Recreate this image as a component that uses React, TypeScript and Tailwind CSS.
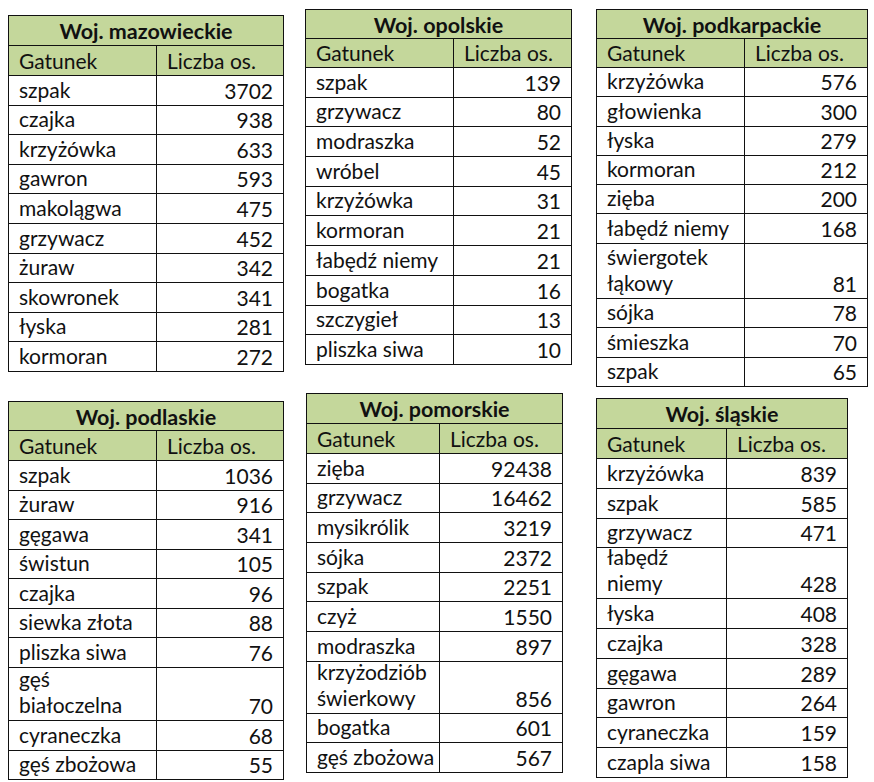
import React from "react";

type R = { n: string[]; v: string; d?: boolean };
type T = {
  title: string;
  box: string;
  lw: string;
  th: string;
  hh: string;
  rh: string;
  dh: string;
  rows: R[];
};

const s = (n: string, v: string): R => ({ n: [n], v });
const d = (a: string, b: string, v: string): R => ({ n: [a, b], v, d: true });

const row1: T[] = [
  {
    title: "Woj. mazowieckie",
    box: "w-[276px] ml-[8px] mt-[15px]",
    lw: "w-[148px]",
    th: "h-[29px]",
    hh: "h-[30px]",
    rh: "h-[29.6px]",
    dh: "h-[56px]",
    rows: [
      s("szpak", "3702"),
      s("czajka", "938"),
      s("krzyżówka", "633"),
      s("gawron", "593"),
      s("makolągwa", "475"),
      s("grzywacz", "452"),
      s("żuraw", "342"),
      s("skowronek", "341"),
      s("łyska", "281"),
      s("kormoran", "272"),
    ],
  },
  {
    title: "Woj. opolskie",
    box: "w-[267px] ml-[21px] mt-[9px]",
    lw: "w-[148px]",
    th: "h-[28px]",
    hh: "h-[29px]",
    rh: "h-[29.7px]",
    dh: "h-[56px]",
    rows: [
      s("szpak", "139"),
      s("grzywacz", "80"),
      s("modraszka", "52"),
      s("wróbel", "45"),
      s("krzyżówka", "31"),
      s("kormoran", "21"),
      s("łabędź niemy", "21"),
      s("bogatka", "16"),
      s("szczygieł", "13"),
      s("pliszka siwa", "10"),
    ],
  },
  {
    title: "Woj. podkarpackie",
    box: "w-[272px] ml-[24px] mt-[9px]",
    lw: "w-[148px]",
    th: "h-[28px]",
    hh: "h-[29px]",
    rh: "h-[29.3px]",
    dh: "h-[55.3px]",
    rows: [
      s("krzyżówka", "576"),
      s("głowienka", "300"),
      s("łyska", "279"),
      s("kormoran", "212"),
      s("zięba", "200"),
      s("łabędź niemy", "168"),
      d("świergotek", "łąkowy", "81"),
      s("sójka", "78"),
      s("śmieszka", "70"),
      s("szpak", "65"),
    ],
  },
];

const row2: T[] = [
  {
    title: "Woj. podlaskie",
    box: "w-[276px] ml-[8px] mt-[14px]",
    lw: "w-[148px]",
    th: "h-[28px]",
    hh: "h-[30px]",
    rh: "h-[29.5px]",
    dh: "h-[53.5px]",
    rows: [
      s("szpak", "1036"),
      s("żuraw", "916"),
      s("gęgawa", "341"),
      s("świstun", "105"),
      s("czajka", "96"),
      s("siewka złota", "88"),
      s("pliszka siwa", "76"),
      d("gęś", "białoczelna", "70"),
      s("cyraneczka", "68"),
      s("gęś zbożowa", "55"),
    ],
  },
  {
    title: "Woj. pomorskie",
    box: "w-[257px] ml-[22px] mt-[6px]",
    lw: "w-[133px]",
    th: "h-[29px]",
    hh: "h-[30px]",
    rh: "h-[29.67px]",
    dh: "h-[52px]",
    rows: [
      s("zięba", "92438"),
      s("grzywacz", "16462"),
      s("mysikrólik", "3219"),
      s("sójka", "2372"),
      s("szpak", "2251"),
      s("czyż", "1550"),
      s("modraszka", "897"),
      d("krzyżodziób", "świerkowy", "856"),
      s("bogatka", "601"),
      s("gęś zbożowa", "567"),
    ],
  },
  {
    title: "Woj. śląskie",
    box: "w-[252px] ml-[33px] mt-[11px]",
    lw: "w-[130px]",
    th: "h-[29px]",
    hh: "h-[30px]",
    rh: "h-[29.78px]",
    dh: "h-[51px]",
    rows: [
      s("krzyżówka", "839"),
      s("szpak", "585"),
      s("grzywacz", "471"),
      d("łabędź", "niemy", "428"),
      s("łyska", "408"),
      s("czajka", "328"),
      s("gęgawa", "289"),
      s("gawron", "264"),
      s("cyraneczka", "159"),
      s("czapla siwa", "158"),
    ],
  },
];

function Table({ t }: { t: T }) {
  return (
    <div className={`${t.box} shrink-0 border border-[#111111] flex flex-col`}>
      <div
        className={`${t.th} bg-[#c4d79b] flex items-center justify-center font-bold text-[21.5px] leading-[24px] pt-[1px]`}
      >
        {t.title}
      </div>
      <div className={`${t.hh} bg-[#c4d79b] border-t border-[#111111] flex`}>
        <div className={`${t.lw} border-r border-[#111111] flex items-end pl-[10px] pb-[2px]`}>
          Gatunek
        </div>
        <div className="flex-1 flex items-end pl-[10px] pb-[2px]">Liczba os.</div>
      </div>
      {t.rows.map((r, i) => (
        <div key={i} className={`${r.d ? t.dh : t.rh} border-t border-[#111111] flex`}>
          <div
            className={`${t.lw} border-r border-[#111111] flex flex-col justify-end pl-[10px] pb-[2px] leading-[26px]`}
          >
            {r.n.map((l, j) => (
              <span key={j} className="whitespace-nowrap">
                {l}
              </span>
            ))}
          </div>
          <div className="flex-1 flex items-end justify-end pr-[10px] pb-[2px]">{r.v}</div>
        </div>
      ))}
    </div>
  );
}

export default function App() {
  return (
    <div className="w-[874px] h-[782px] bg-white text-[#111111] font-['Lato',sans-serif] text-[21px] leading-[24px] overflow-hidden">
      <div className="flex items-start h-[387px]">
        {row1.map((t, i) => (
          <Table key={i} t={t} />
        ))}
      </div>
      <div className="flex items-start">
        {row2.map((t, i) => (
          <Table key={i} t={t} />
        ))}
      </div>
    </div>
  );
}
